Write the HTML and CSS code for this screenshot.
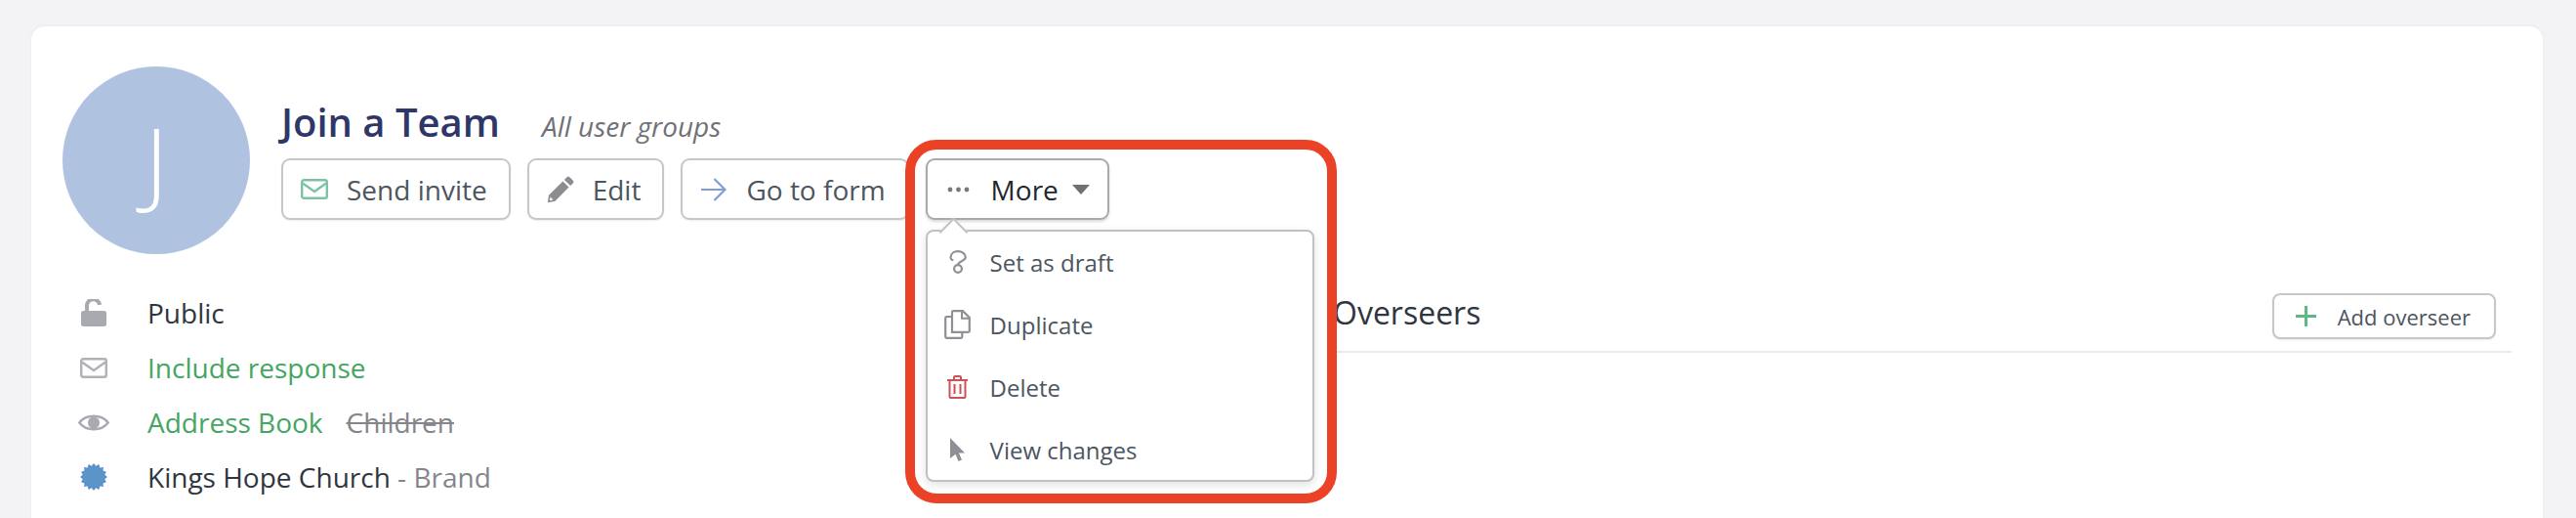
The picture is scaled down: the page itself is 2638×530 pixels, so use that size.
FILE: index.html
```html
<!DOCTYPE html>
<html lang="en">
<head>
<meta charset="utf-8">
<title>Join a Team</title>
<link rel="stylesheet" href="styles.css">
</head>
<body>
<main class="card">
  <header class="head">
    <div class="avatar">J</div>
    <div class="info">
      <div class="title-row">
        <h1 class="title">Join a Team</h1>
        <span class="groups">All user groups</span>
      </div>
      <div class="actions">
        <button class="btn">
          <span class="btn-icon"><svg width="28" height="21" viewBox="0 0 28 21"><rect x="1.2" y="1.2" width="25.6" height="18.6" rx="2" fill="none" stroke="#7cc3a6" stroke-width="2.4"/><path d="M2 4.5 14 13 26 4.5" fill="none" stroke="#7cc3a6" stroke-width="2.4"/></svg></span>
          Send invite
        </button>
        <button class="btn">
          <span class="btn-icon"><svg width="28" height="28" viewBox="0 0 28 28"><path d="M20.6 1.2a2 2 0 0 1 2.7 0l3.500 3.500a2 2 0 0 1 0 2.700l-2.700 2.700-6.200-6.200zM16.400 5.400l6.200 6.200L8.200 26 0.800 27.200 2 19.800zM3.600 21.500l-.8 3.700 3.700-.8-2.900-2.900z" fill="#8b8c91" fill-rule="evenodd"/></svg></span>
          Edit
        </button>
        <button class="btn">
          <span class="btn-icon"><svg width="26" height="24" viewBox="0 0 26 24"><path d="M0 12H24M13.500 1 24.500 12 13.500 23" fill="none" stroke="#7d9fd3" stroke-width="2.200"/></svg></span>
          Go to form
        </button>
        <div class="more">
          <button class="btn btn-open">
            <span class="btn-icon"><svg width="23" height="6" viewBox="0 0 23 6"><circle cx="3" cy="3" r="2.400" fill="#77787e"/><circle cx="11.500" cy="3" r="2.400" fill="#77787e"/><circle cx="20" cy="3" r="2.400" fill="#77787e"/></svg></span>
            <span class="more-label">More</span>
            <svg class="caret" width="18" height="10" viewBox="0 0 18 10"><path d="M0 0H18L9 10z" fill="#6f7076"/></svg>
          </button>
          <div class="menu-tip"></div>
          <ul class="menu">
            <li class="menu-item"><span class="menu-icon"><svg width="18" height="24" viewBox="0 0 18 24"><path d="M1.500 7.500C1.500 3.500 5 1.200 9 1.200S16.800 3.500 16.800 7.200C16.800 10.800 10.500 10.800 9 14.500M1.500 7.500C1.500 8.500 2 9.500 3.500 10" fill="none" stroke="#8f9095" stroke-width="2.200" stroke-linecap="round"/><circle cx="9" cy="19" r="3.900" fill="none" stroke="#8f9095" stroke-width="2.200"/></svg></span>Set as draft</li>
            <li class="menu-item"><span class="menu-icon"><svg width="27" height="30" viewBox="0 0 27 30"><path d="M8 4.500V2.500A1.300 1.300 0 0 1 9.300 1.200H19L25.800 8V21.500A1.300 1.300 0 0 1 24.500 22.800H8z" fill="none" stroke="#8f9095" stroke-width="2.200"/><path d="M18 1.500V8.800H25.500" fill="none" stroke="#8f9095" stroke-width="2"/><path d="M8 7H2.500A1.300 1.300 0 0 0 1.200 8.300V27.500A1.300 1.300 0 0 0 2.500 28.800H17A1.300 1.300 0 0 0 18.300 27.500V23" fill="none" stroke="#8f9095" stroke-width="2.200"/></svg></span>Duplicate</li>
            <li class="menu-item"><span class="menu-icon"><svg width="21" height="24" viewBox="0 0 21 24"><path d="M0 5H21M7 5V2A1 1 0 0 1 8 1H13A1 1 0 0 1 14 2V5M2.500 5V22A1 1 0 0 0 3.500 23H17.500A1 1 0 0 0 18.500 22V5M7.500 9V19M13.500 9V19" fill="none" stroke="#cf5157" stroke-width="2"/></svg></span>Delete</li>
            <li class="menu-item"><span class="menu-icon"><svg width="15" height="24" viewBox="0 0 15 24"><path d="M0 0 15 15.500H9L12 22.500 8.500 24 5.500 16.800 0 21z" fill="#8f9095"/></svg></span>View changes</li>
          </ul>
          <div class="highlight"></div>
        </div>
      </div>
    </div>
  </header>
  <section class="columns">
    <ul class="facts">
      <li class="fact"><span class="fact-icon"><svg width="26" height="28" viewBox="0 0 26 28"><path d="M6 13V7.500A6.500 6.500 0 0 1 19 6" fill="none" stroke="#a9aab0" stroke-width="4"/><rect x="0" y="12" width="26" height="16" rx="2.500" fill="#a9aab0"/></svg></span>Public</li>
      <li class="fact fact-green"><span class="fact-icon"><svg width="28" height="21" viewBox="0 0 28 21"><rect x="1.200" y="1.200" width="25.600" height="18.600" rx="2" fill="none" stroke="#b0b1b6" stroke-width="2.400"/><path d="M2 4.500 14 13 26 4.500" fill="none" stroke="#b0b1b6" stroke-width="2.400"/></svg></span>Include response</li>
      <li class="fact"><span class="fact-icon"><svg width="32" height="21" viewBox="0 0 32 21"><path d="M1.300 10.500C8 1.500 24 1.500 30.700 10.500 24 19.500 8 19.500 1.300 10.500z" fill="none" stroke="#a9aab0" stroke-width="2.400"/><circle cx="16" cy="10.500" r="6" fill="#a9aab0"/></svg></span><span class="fact-green">Address Book</span><s class="struck">Children</s></li>
      <li class="fact"><span class="fact-icon"><svg width="28" height="28" viewBox="0 0 28 28"><polygon fill="#5a94c8" points="28,14 25.28,16.24 26.93,19.36 23.56,20.39 23.9,23.9 20.39,23.56 19.36,26.93 16.24,25.28 14,28 11.76,25.28 8.64,26.93 7.61,23.56 4.1,23.9 4.44,20.39 1.07,19.36 2.72,16.24 0,14 2.72,11.76 1.07,8.64 4.44,7.61 4.1,4.1 7.61,4.44 8.64,1.07 11.76,2.72 14,0 16.24,2.72 19.36,1.07 20.39,4.44 23.9,4.1 23.56,7.61 26.93,8.64 25.28,11.76"/></svg></span>Kings Hope Church<span class="brand">&nbsp;- Brand</span></li>
    </ul>
    <div class="overseers">
      <h2 class="overseers-title">Overseers</h2>
      <button class="btn btn-small">
        <svg class="plus" width="21" height="21" viewBox="0 0 21 21"><path d="M10.500 0V21M0 10.500H21" stroke="#5cb985" stroke-width="3"/></svg>
        Add overseer
      </button>
    </div>
  </section>
</main>
</body>
</html>
```
FILE: styles.css
```css
* {
  box-sizing: border-box;
}

html,
body {
  height: 100%;
}

body {
  margin: 0;
  padding: 27px 34px 0 32px;
  overflow: hidden;
  background: #f3f2f4;
  font-family: "Open Sans", sans-serif;
  color: #2f3640;
}

ul {
  margin: 0;
  padding: 0;
  list-style: none;
}

.card {
  height: 503px;
  padding: 41px 32px 0;
  background: #fff;
  border-radius: 14px 14px 0 0;
  box-shadow: 0 -1px 0 1px #efedf0;
}

.head {
  display: flex;
  gap: 32px;
}

.avatar {
  flex: none;
  width: 192px;
  height: 192px;
  border-radius: 50%;
  background: #afc3e1;
  color: #fff;
  font-size: 96px;
  font-weight: 300;
  line-height: 192px;
  text-align: center;
}

.info {
  padding-top: 32px;
}

.title-row {
  display: flex;
  align-items: baseline;
  gap: 43px;
  height: 62px;
}

.title {
  margin: 0;
  font-size: 40px;
  font-weight: 600;
  line-height: 50px;
  color: #2f3768;
}

.groups {
  font-size: 28px;
  font-style: italic;
  color: #6f7177;
}

.actions {
  display: flex;
  gap: 17px;
}

.btn {
  display: flex;
  align-items: center;
  height: 63px;
  padding: 0 22px 0 17px;
  background: #fff;
  border: 2px solid #c6c7cb;
  border-radius: 9px;
  box-shadow: 0 1px 2px rgba(0, 0, 0, 0.08);
  font: inherit;
  font-size: 28px;
  color: #4c5560;
  white-space: nowrap;
}

.btn-icon {
  display: flex;
  flex: none;
  align-items: center;
  justify-content: center;
  width: 30px;
  margin-right: 18px;
}

.btn-open {
  padding-right: 18px;
  border-color: #a9aab0;
  box-shadow: 0 2px 3px rgba(0, 0, 0, 0.15);
}

.more {
  position: relative;
}

.more-label {
  color: #23262c;
}

.caret {
  margin-left: 14px;
}

.menu-tip {
  position: absolute;
  top: 65px;
  left: 18px;
  z-index: 2;
  width: 21px;
  height: 21px;
  background: #fff;
  border-top: 2px solid #c0c1c5;
  border-left: 2px solid #c0c1c5;
  transform: rotate(45deg);
}

.menu {
  position: absolute;
  top: 73px;
  left: 0;
  z-index: 1;
  width: 398px;
  height: 258px;
  background: #fff;
  border: 2px solid #c0c1c5;
  border-radius: 8px;
  box-shadow: 0 3px 10px rgba(0, 0, 0, 0.12);
}

.menu-item {
  display: flex;
  align-items: center;
  height: 64px;
  font-size: 24px;
  color: #4c5560;
}

.menu-item:first-child {
  margin-top: -1px;
}

.menu-icon {
  display: flex;
  flex: none;
  align-items: center;
  justify-content: center;
  width: 44px;
  margin: 0 11px 0 9px;
}

.highlight {
  position: absolute;
  top: -19px;
  left: -21px;
  z-index: 3;
  width: 442px;
  height: 372px;
  border: 10px solid #eb4227;
  border-radius: 32px;
}

.columns {
  display: grid;
  grid-template-columns: 1301px 1207px;
  margin-top: 32px;
}

.fact {
  display: flex;
  align-items: center;
  height: 56px;
  font-size: 28px;
}

.fact-icon {
  display: flex;
  flex: none;
  align-items: center;
  justify-content: center;
  width: 64px;
  margin-right: 23px;
}

.fact-green {
  color: #45a563;
}

.struck {
  margin-left: 24px;
  color: #84868c;
}

.brand {
  color: #84868c;
}

.overseers {
  display: flex;
  align-items: flex-start;
  justify-content: space-between;
  height: 69px;
  padding: 8px 16px 0 0;
  border-bottom: 2px solid #ece8ec;
}

.overseers-title {
  margin: 0;
  font-size: 32px;
  font-weight: 400;
  line-height: 40px;
}

.btn-small {
  height: 47px;
  padding: 0 24px 0 22px;
  border-radius: 8px;
  font-size: 22px;
}

.plus {
  margin-right: 22px;
}
```
